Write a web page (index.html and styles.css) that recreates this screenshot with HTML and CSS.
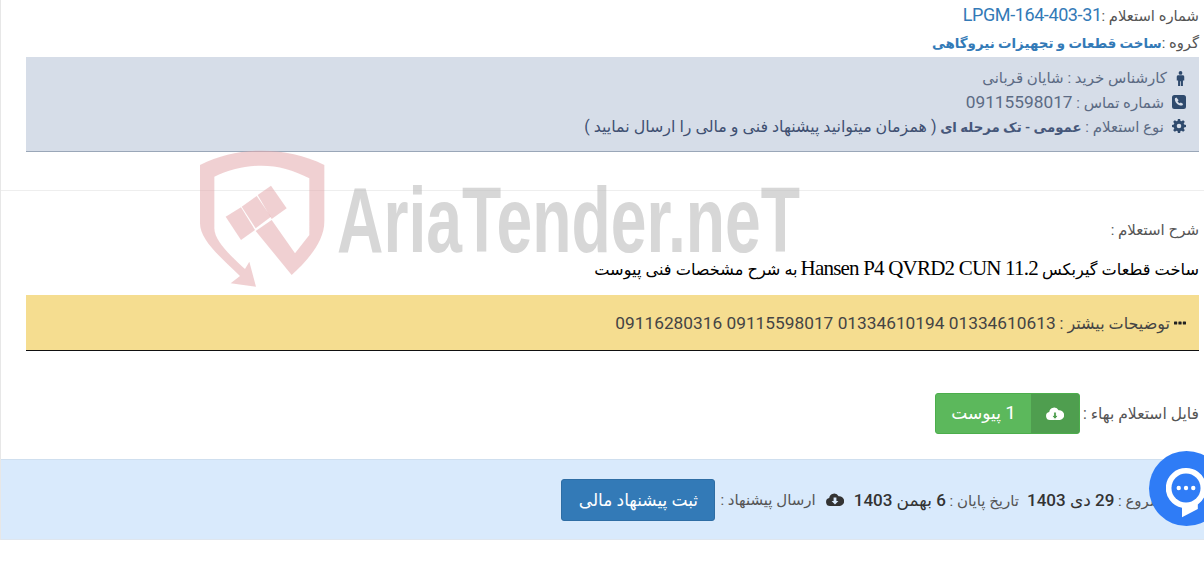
FILE: index.html
```html
<!DOCTYPE html>
<html lang="fa" dir="rtl">

<head>
    <title>AriaTender</title>
    <meta charset="utf-8">
    <meta name="viewport" content="width=device-width, initial-scale=1.0">
    <link rel="stylesheet" href="styles.css">
</head>

<body>
    <div class="page">
        <section class="top">
            <p class="head-line">شماره استعلام :<a class="ref-no" href="#">LPGM-164-403-31</a></p>
            <p class="head-line head-group">گروه :<b class="group-name">ساخت قطعات و تجهیزات نیروگاهی</b></p>
            <div class="info-box">
                <p class="info-line">
                    <svg class="icon icon-man" viewBox="0 0 10 16"><circle cx="5" cy="2" r="2"/><path d="M2.600 4.400h4.800c.9 0 1.600.7 1.600 1.600v4.200H7.600V16H5.400v-5H4.600v5H2.400v-5.800H1V6c0-.9.7-1.600 1.600-1.600z"/></svg>
                    <span>کارشناس خرید : شایان قربانی</span>
                </p>
                <p class="info-line">
                    <svg class="icon" viewBox="0 0 14 14"><path fill-rule="evenodd" d="M2.500 0h9A2.500 2.500 0 0 1 14 2.500v9a2.500 2.500 0 0 1-2.500 2.500h-9A2.500 2.500 0 0 1 0 11.500v-9A2.500 2.500 0 0 1 2.500 0zM4.500 2.500 3 3.300c-.5 1.500.2 3.500 1.800 5.200 1.700 1.700 3.800 2.400 5.400 2l1-1.600-2.400-1.500-1 .9C6.900 8.200 5.900 7.200 5.600 6.300l1-1z"/></svg>
                    <span>شماره تماس : <span class="num">09115598017</span></span>
                </p>
                <p class="info-line">
                    <svg class="icon" viewBox="0 0 14 14"><path fill-rule="evenodd" d="M5.900 0h2.200l.4 1.900 1 .4L11.200 1.200l1.600 1.600-1.100 1.700.4 1 1.900.4v2.200l-1.900.4-.4 1 1.100 1.700-1.600 1.600-1.700-1.100-1 .4-.4 1.900H5.900l-.4-1.900-1-.4-1.700 1.100-1.600-1.600 1.100-1.700-.4-1L0 8.100V5.900l1.900-.4.4-1L1.200 2.800l1.600-1.600 1.700 1.100 1-.4zM7 4.700a2.300 2.300 0 1 0 0 4.600 2.300 2.300 0 0 0 0-4.600z"/></svg>
                    <span>نوع استعلام : <b>عمومی - تک مرحله ای</b> <span class="info-note">( همزمان میتوانید پیشنهاد فنی و مالی را ارسال نمایید )</span></span>
                </p>
            </div>
        </section>

        <hr class="divider">

        <section class="details">
            <p class="desc-label">شرح استعلام :</p>
            <p class="desc-title">ساخت قطعات گیربکس <span class="desc-latin">Hansen P4 QVRD2 CUN 11.2</span> به شرح مشخصات فنی پیوست</p>
            <div class="note-box">
                <svg class="icon-dots" viewBox="0 0 12 4"><rect width="3.200" height="3.200" y=".4" rx=".6"/><rect x="4.400" y=".4" width="3.200" height="3.200" rx=".6"/><rect x="8.800" y=".4" width="3.200" height="3.200" rx=".6"/></svg>
                <span>توضیحات بیشتر : <span class="num">01334610613 01334610194 09115598017 09116280316</span></span>
            </div>
            <div class="file-row">
                <span class="file-label">فایل استعلام بهاء :</span>
                <a class="file-btn" href="#">
                    <span class="file-btn-icon">
                        <svg viewBox="0 0 18 14"><path fill-rule="evenodd" d="M4 13a4 4 0 0 1-.8-7.900A5 5 0 0 1 12.600 3.300 4.900 4.900 0 0 1 14 13z"/><path class="arrow" d="M7.600 5h2.800v3.600h2L9 12.400 5.600 8.600h2z"/></svg>
                    </span>
                    <span class="file-btn-text"><span class="num">1</span> پیوست</span>
                </a>
            </div>
        </section>

        <section class="dates-band">
            <span class="date-start">تاریخ شروع : <b>29 دی 1403</b></span>
            <span>تاریخ پایان : <b>6 بهمن 1403</b></span>
            <svg class="icon-cloud" viewBox="0 0 18 14"><path fill-rule="evenodd" d="M4 13a4 4 0 0 1-.8-7.900A5 5 0 0 1 12.600 3.300 4.900 4.900 0 0 1 14 13zM7.600 4.500v3.600h-2L9 11.600l3.400-3.500h-2V4.500z"/></svg>
            <span>ارسال پیشنهاد :</span>
            <a class="offer-btn" href="#">ثبت پیشنهاد مالی</a>
        </section>

        <!-- لوگوی پس زمینه -->
        <svg class="watermark" viewBox="0 0 2700 450">
            <path class="wm-shield" d="M30 60C90 30 150 17 215 17C280 17 345 30 403 60L403 230C403 290 350 350 305 390L197 258L245 225L315 325L358 270L358 100C310 75 265 62 215 62C165 62 115 75 73 95L73 250C73 290 130 340 165 372L178 350L198 425L122 415L150 393C90 335 30 285 30 235Z"/>
            <path class="wm-shield" d="M107 215L153 187L195 255L153 285Z"/>
            <path class="wm-shield" d="M155 185L200 153L243 215L197 250Z"/>
            <path class="wm-shield" d="M203 150L243 122L290 190L245 222Z"/>
            <text class="wm-text" x="441" y="320" textLength="1389" lengthAdjust="spacingAndGlyphs">AriaTender.neT</text>
        </svg>

        <a class="chat-bubble" href="#" aria-label="chat">
            <svg viewBox="0 0 44 56"><path fill="#fff" d="M22 0a22 22 0 0 1 13 40L35 45 17.600 54V43.600A22 22 0 0 1 22 0z"/><circle cx="22" cy="22" r="16" fill="#2f7cf6"/><circle cx="14" cy="22" r="2.400" fill="#fff"/><circle cx="22" cy="22" r="2.400" fill="#fff"/><circle cx="30" cy="22" r="2.400" fill="#fff"/></svg>
        </a>
    </div>
</body>

</html>
```

FILE: styles.css
```css
* {
    box-sizing: border-box;
}

html,
body {
    margin: 0;
    padding: 0;
    overflow: hidden;
}

body {
    background: #fff;
    font-family: Roboto, "DejaVu Sans", sans-serif;
    font-size: 15px;
    color: #555;
    height: 564px;
}

p {
    margin: 0;
}

a {
    text-decoration: none;
}

.page {
    position: relative;
    border-left: 1px solid #e7e7e7;
    height: 540px;
}

.top {
    padding: 5px 5px 0 4px;
}

.head-line {
    height: 28px;
    line-height: 20px;
    font-size: 14.8px;
}

.head-group {
    height: 24px;
    line-height: 20px;
}

.ref-no {
    color: #337ab7;
    font-size: 18px;
    letter-spacing: -0.4px;
}

.group-name {
    color: #337ab7;
    font-size: 13.4px;
}

.info-box {
    margin-left: 21px;
    height: 95px;
    padding: 9px 13px 0 0;
    background: #d6dde8;
    border-bottom: 1px solid #9aa7b8;
    color: #5c6b84;
}

.info-line {
    display: flex;
    align-items: center;
    gap: 8px;
    height: 24px;
}

.info-line b {
    color: #46577a;
    font-size: 13.3px;
}

.info-note {
    color: #3f5072;
    font-size: 15.9px;
}

.num {
    font-size: 17.3px;
}

.icon {
    width: 14px;
    height: 14px;
    fill: #2f4a6d;
    flex: none;
}

.icon-man {
    width: 11px;
    height: 15px;
}

.divider {
    border: 0;
    border-top: 1px solid #eee;
    margin: 38px 0 0;
}

.details {
    padding: 0 5px 0 4px;
}

.desc-label {
    margin-top: 29px;
    line-height: 20px;
}

.desc-title {
    margin-top: 18px;
    line-height: 20px;
    height: 37px;
    color: #000;
    font-family: "Liberation Serif", "DejaVu Sans", serif;
    font-size: 16.2px;
    letter-spacing: -1.1px;
}

.desc-latin {
    font-size: 21px;
    letter-spacing: -0.8px;
}

.note-box {
    display: flex;
    align-items: center;
    gap: 4px;
    margin-left: 21px;
    height: 56px;
    padding-right: 13px;
    background: #f5dd90;
    border-bottom: 1px solid #111;
    color: #444;
    font-size: 16px;
}

.icon-dots {
    width: 12px;
    height: 4px;
    fill: #222;
}

.file-row {
    display: flex;
    align-items: center;
    gap: 3px;
    margin-top: 42px;
    height: 41px;
}

.file-label {
    font-size: 15.6px;
}

.file-btn {
    display: flex;
    height: 41px;
    width: 145px;
    background: #5cb85c;
    border: 1px solid #4cae4c;
    border-radius: 3px;
    color: #fff;
}

.file-btn-icon {
    display: flex;
    align-items: center;
    justify-content: center;
    width: 48px;
    background: #4f9e4f;
}

.file-btn-icon svg {
    width: 18px;
    height: 14px;
    fill: #fff;
}

.file-btn-icon .arrow {
    fill: #4f9e4f;
    stroke: #fff;
    stroke-width: 1;
}

.file-btn-text {
    flex: 1;
    text-align: center;
    line-height: 38px;
    font-size: 17px;
}

.file-btn-text .num {
    font-size: 19px;
}

.dates-band {
    display: flex;
    align-items: center;
    gap: 5px;
    margin-top: 25px;
    height: 81px;
    padding-right: 8px;
    background: #d9eafc;
    border-top: 1px solid #cfdfef;
    border-bottom: 1px solid #dfe6ee;
}

.date-start {
    margin-left: 3px;
}

.dates-band b {
    font-weight: 500;
    font-size: 17px;
    color: #333;
}

.icon-cloud {
    width: 18px;
    height: 14px;
    fill: #333;
    margin: 0 5px;
}

.offer-btn {
    display: block;
    width: 154px;
    height: 42px;
    line-height: 40px;
    text-align: center;
    background: #337ab7;
    border: 1px solid #2e6da4;
    border-radius: 3px;
    color: #fff;
    font-size: 17px;
}

.watermark {
    position: absolute;
    left: 189px;
    top: 145px;
    width: 900px;
    height: 150px;
    pointer-events: none;
}

.wm-shield {
    fill: #e4a9ad;
    opacity: 0.55;
}

.wm-text {
    direction: ltr;
    unicode-bidi: isolate;
    font-family: "Liberation Sans", sans-serif;
    font-weight: 700;
    font-size: 276px;
    fill: #bdbdbd;
    opacity: 0.6;
}

.chat-bubble {
    position: absolute;
    left: 1148px;
    top: 451px;
    width: 75px;
    height: 75px;
    border-radius: 50%;
    background: #2f7cf6;
    display: flex;
    align-items: center;
    justify-content: center;
}

.chat-bubble svg {
    width: 40px;
    height: 51px;
    margin-left: -1px;
    margin-top: 9px;
}
```
